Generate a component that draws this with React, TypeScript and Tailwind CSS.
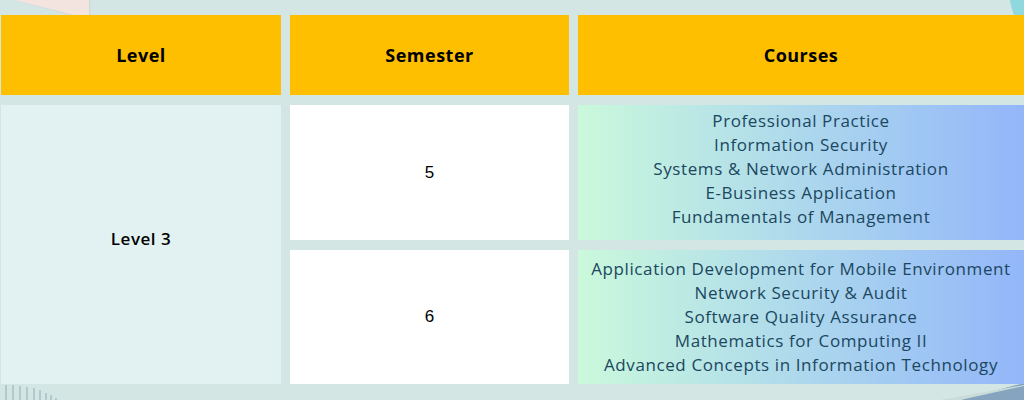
import React from "react";

const sem5 = [
  "Professional Practice",
  "Information Security",
  "Systems & Network Administration",
  "E-Business Application",
  "Fundamentals of Management",
];

const sem6 = [
  "Application Development for Mobile Environment",
  "Network Security & Audit",
  "Software Quality Assurance",
  "Mathematics for Computing II",
  "Advanced Concepts in Information Technology",
];

const poppins = "font-['Open_Sans',sans-serif]";

const CourseCell = ({ items, extra }: { items: string[]; extra?: string }) => (
  <div
    className={`flex flex-col items-center justify-center bg-gradient-to-r from-[#caf9db] to-[#93b6f9] text-[17px] leading-[24px] tracking-[0.6px] text-[#1b4760] whitespace-nowrap ${extra ?? ""}`}
  >
    {items.map((c) => (
      <div key={c}>{c}</div>
    ))}
  </div>
);

// decorative bits of the slide background
const Decor = () => (
  <svg className="absolute inset-0 pointer-events-none" width="1024" height="400" viewBox="0 0 1024 400">
    <polygon points="15,0 70,15 91,22 90,0" fill="#d6c9c4" opacity="0.5" />
    <polygon points="15,0 70,14 89,20 89,0" fill="#f4e4df" />
    <path d="M1010,0 L1024,0 L1024,15 L1014,15 Q1011,8 1010,0 Z" fill="#8fd8de" />
    <polygon points="960,400 1024,383 1024,400" fill="#86a4c0" />
    <polygon points="940,400 1024,385 1024,386 960,400" fill="#c9dcd7" />
    {[
      [6, 15],
      [13, 15],
      [20, 14],
      [27, 13],
      [34, 12],
      [40, 10],
      [46, 7],
      [51, 5],
      [56, 2],
    ].map(([x, h]) => (
      <line key={x} x1={x} x2={x} y1={400 - h} y2={400} stroke="#8fb0b4" strokeWidth="1" />
    ))}
  </svg>
);

export default function App() {
  return (
    <div className="relative w-[1024px] h-[400px] overflow-hidden bg-[#d3e6e4]">
      <Decor />
      <div
        className={`relative pl-[1px] pt-[15px] grid grid-cols-[280px_279px_1fr] grid-rows-[80px_135px_134px] gap-x-[9px] gap-y-[10px] ${poppins}`}
      >
        <div className="flex items-center justify-center bg-[#fdbf00] text-[18px] tracking-[0.5px] font-bold text-black">Level</div>
        <div className="flex items-center justify-center bg-[#fdbf00] text-[18px] tracking-[0.5px] font-bold text-black">Semester</div>
        <div className="flex items-center justify-center bg-[#fdbf00] text-[18px] tracking-[0.5px] font-bold text-black">Courses</div>

        <div className="row-span-2 flex items-center justify-center pb-[12px] bg-[#e2f2f2] text-[17px] tracking-[0.5px] font-semibold text-black">
          Level 3
        </div>
        <div className="flex items-center justify-center bg-white text-[17px] text-black font-['Liberation_Sans',sans-serif]">
          5
        </div>
        <CourseCell items={sem5} extra="pb-[8px]" />

        <div className="flex items-center justify-center bg-white text-[17px] text-black font-['Liberation_Sans',sans-serif]">
          6
        </div>
        <CourseCell items={sem6} />
      </div>
    </div>
  );
}
